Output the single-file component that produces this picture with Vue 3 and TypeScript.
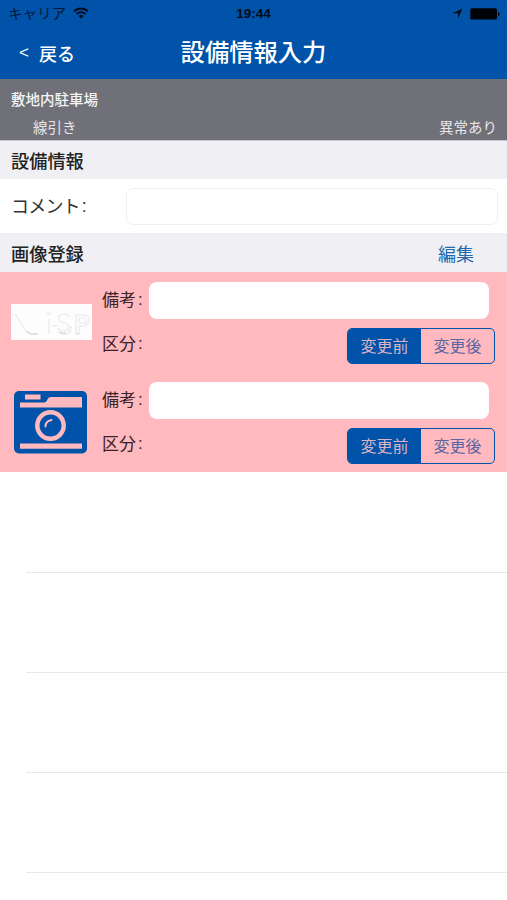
<script setup lang="ts">
import { ref } from 'vue'

interface Photo {
  id: number
  kind: 'logo' | 'camera'
  note: string
  phase: number
}

const comment = ref('')
const phases = ['変更前', '変更後']
const photos = ref<Photo[]>([
  { id: 1, kind: 'logo', note: '', phase: 0 },
  { id: 2, kind: 'camera', note: '', phase: 0 },
])
</script>

<template>
  <div class="screen">
    <header class="top">
      <div class="status">
        <div class="carrier">
          <span>キャリア</span>
          <svg class="wifi" viewBox="0 0 16 12" width="16" height="12">
            <path d="M1 4.300a10 10 0 0 1 14 0M3.600 7a6.200 6.200 0 0 1 8.800 0" fill="none" stroke="#000c1c" stroke-width="1.900" />
            <path d="M5.600 9a3.400 3.400 0 0 1 4.800 0L8 11.500z" fill="#000c1c" />
          </svg>
        </div>
        <span class="clock">19:44</span>
        <div class="indicators">
          <svg viewBox="0 0 11 11" width="11" height="11"><path d="M10.500.5 6 10.500V5.200H.5z" fill="#000c1c" /></svg>
          <svg viewBox="0 0 30 12" width="30" height="12">
            <rect x=".3" y=".3" width="26.700" height="11.200" rx="1.600" fill="#000308" />
            <path d="M28 4q1.600.3 1.600 2T28 8z" fill="#000308" />
          </svg>
        </div>
      </div>
      <nav class="nav">
        <button class="back"><span class="lt">&lt;</span><span>戻る</span></button>
        <h1>設備情報入力</h1>
        <span></span>
      </nav>
    </header>

    <section class="place">
      <div class="place-name">敷地内駐車場</div>
      <div class="place-detail"><span>線引き</span><span>異常あり</span></div>
    </section>

    <h2 class="heading first"><span>設備情報</span></h2>
    <label class="comment">
      <span class="comment-label">コメント<i class="colon">:</i></span>
      <input v-model="comment" type="text" />
    </label>
    <h2 class="heading"><span>画像登録</span><button class="edit">編集</button></h2>

    <ul class="list">
      <li v-for="photo in photos" :key="photo.id" class="photo">
        <div class="thumb">
          <svg v-if="photo.kind === 'logo'" class="logo" viewBox="0 0 81 36" width="81" height="36">
            <rect width="81" height="36" fill="#fdfdfd" />
            <g fill="none" stroke="#e9e9e9" stroke-width="1.200">
              <path d="M4 10l11 17q2 3 5 3h7M37 8v3M39 8v3M38 15v15M41 22h5" />
              <path d="M59 13q-2-3-6-3-5 0-5 4 0 4 6 5 4 1 4 4t-5 4q-4 0-6-3M47 28q3 3 8 2 6-1 5-8" />
              <path d="M65 30V11h7q6 0 6 5t-6 6h-4v8M68 19v-5h4q3 0 3 3t-3 2z" />
            </g>
            <path d="M16 27q2 3 5 3h6M49 28q3 2 6 1M65 30h3" fill="none" stroke="#cfcfcf" />
          </svg>
          <svg v-else class="camera" viewBox="0 0 73 63" width="73" height="63">
            <rect width="73" height="62.500" rx="5" fill="#0053a8" />
            <path d="M11 3.500h15.500v5H11zM6 11.500h24q2 0 3-2l1-2Q34.500 6 37 6h31v10.500H6zM6 52.500h62v5.200H6z" fill="#ffb9bf" />
            <circle cx="36.500" cy="34.500" r="13.200" fill="none" stroke="#ffb9bf" stroke-width="4.500" />
            <path d="M31.500 35.500q0-5.500 6-6.500" fill="none" stroke="#ffb9bf" stroke-width="2" stroke-linecap="round" />
          </svg>
        </div>
        <div class="fields">
          <label class="note"><span class="field-label">備考<i class="colon">:</i></span><input v-model="photo.note" type="text" /></label>
          <div class="phase">
            <span class="field-label">区分<i class="colon">:</i></span>
            <div class="segments">
              <button
                v-for="(name, index) in phases"
                :key="name"
                :class="{ on: photo.phase === index }"
                @click="photo.phase = index"
              >{{ name }}</button>
            </div>
          </div>
        </div>
      </li>
      <li v-for="n in 4" :key="`blank-${n}`" class="blank"></li>
    </ul>
  </div>
</template>

<style>
body {
  background: #fff;
}
</style>

<style scoped>
.screen {
  width: 100%;
  height: 900px;
  overflow: hidden;
  background: #fff;
  color: #222;
  font-family: "Liberation Sans", "Noto Sans CJK JP", sans-serif;
}
.screen * {
  box-sizing: border-box;
}
button, input {
  margin: 0;
  padding: 0;
  border: 0;
  background: none;
  font-family: inherit;
  color: inherit;
}
h1, h2, ul {
  margin: 0;
  padding: 0;
}
.top {
  height: 79px;
  background: #0053a8;
}
.status, .nav {
  display: grid;
  grid-template-columns: 1fr auto 1fr;
}
.status {
  height: 27px;
  padding: 0 7px 0 8px;
  align-items: center;
  color: #001a38;
}
.carrier {
  display: flex;
  align-items: center;
  gap: 7px;
  font-size: 14.500px;
  line-height: 20px;
}
.wifi {
  margin-top: -2px;
}
.clock {
  padding-right: 1px;
  font-size: 13.500px;
  font-weight: 700;
  color: #000c1c;
  line-height: 20px;
}
.indicators {
  display: flex;
  justify-content: flex-end;
  align-items: center;
  gap: 7px;
}
.nav {
  height: 52px;
  color: #fff;
}
.back {
  display: flex;
  align-items: center;
  gap: 10px;
  height: 52px;
  padding-left: 19px;
  font-size: 18px;
  font-weight: 500;
}
.lt {
  font-size: 17px;
}
h1 {
  font-size: 24.300px;
  font-weight: 500;
  line-height: 51px;
}
.place {
  height: 61px;
  padding: 10px 10px 0 11px;
  background: #707078;
  color: #fff;
  font-size: 14.500px;
}
.place-name {
  line-height: 22px;
  font-weight: 500;
  color: #f4f4f6;
}
.place-detail {
  display: flex;
  justify-content: space-between;
  padding: 6px 0 0 22px;
  line-height: 22px;
  color: #e6e6ea;
}
.heading {
  display: flex;
  justify-content: space-between;
  height: 39px;
  padding: 0 33px 0 11px;
  background: #efeff4;
  font-size: 18.200px;
  font-weight: 500;
  line-height: 44px;
}
.heading.first {
  border-top: 1px solid #c8c8cf;
  line-height: 43px;
}
.edit {
  font-size: 18px;
  color: #2269ae;
  line-height: 44px;
}
.comment {
  display: flex;
  align-items: center;
  height: 54px;
  padding: 0 9px 0 11px;
}
.comment-label {
  width: 115px;
  padding-bottom: 3px;
  font-size: 18px;
  letter-spacing: -0.800px;
  color: #333;
}
.colon {
  display: inline-block;
  margin-left: 2px;
  font-style: normal;
  transform: translateY(-1px);
}
.comment input {
  flex: 1;
  height: 37px;
  border: 1px solid #f0f0f0;
  border-radius: 7px;
}
.list {
  list-style: none;
}
.photo {
  display: flex;
  height: 100px;
  background: #ffb9bf;
}
.thumb {
  display: flex;
  justify-content: center;
  align-items: center;
  width: 102px;
}
.logo, .camera {
  display: block;
}
.camera {
  margin-right: 1px;
}
.fields {
  flex: 1;
  padding-top: 10px;
}
.note, .phase {
  display: flex;
}
.field-label {
  width: 47px;
  font-size: 17px;
  line-height: 37px;
  color: #3a2326;
}
.note input {
  width: 340px;
  height: 37px;
  border-radius: 8px;
  background: #fff;
}
.phase {
  padding: 9px 12px 0 0;
  justify-content: space-between;
}
.phase .field-label {
  line-height: 33px;
}
.segments {
  display: grid;
  grid-template-columns: 1fr 1fr;
  width: 148px;
  height: 36px;
  border: 1.500px solid #0053a8;
  border-radius: 5px;
  overflow: hidden;
}
.segments button {
  padding-bottom: 2px;
  font-size: 16px;
  color: #5967a3;
}
.segments .on {
  background: #0053a8;
  color: #d9b2c5;
}
.blank {
  height: 100px;
  margin-left: 26px;
  border-bottom: 1px solid #e8e8e9;
}
.blank:nth-child(3) {
  height: 101px;
}
</style>
